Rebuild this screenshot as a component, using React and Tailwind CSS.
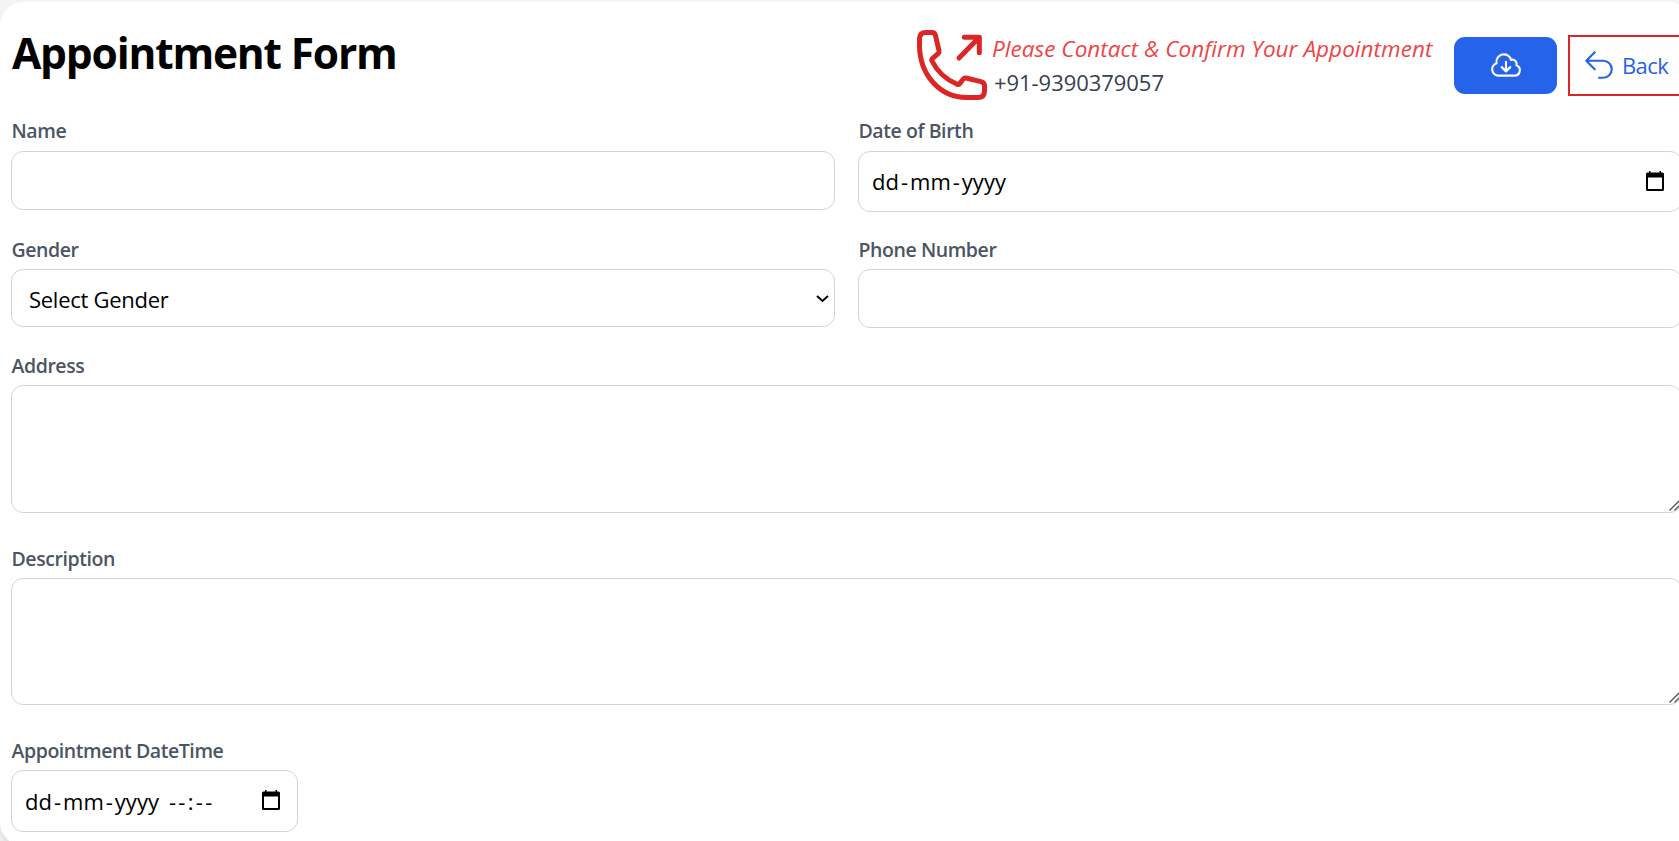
const box = "rounded-[12px] border border-[#d1d5db] bg-white";

function Label({ children, className = "pt-[2px]" }) {
  return (
    <div className={`h-[35px] whitespace-nowrap pl-[0.5px] text-[19.5px] font-semibold leading-[28px] tracking-[-0.43px] text-[#4b5563] ${className}`}>
      {children}
    </div>
  );
}

function CalendarIcon() {
  return (
    <svg className="mb-[2px] h-[20px] w-[18px] shrink-0" viewBox="0 0 18 20" fill="#000">
      <path fillRule="evenodd" d="M3 0h1.500v1.500h9V0H15v1.500h1.500A1.500 1.500 0 0 1 18 3v15.500a1.500 1.500 0 0 1-1.500 1.500h-15A1.500 1.500 0 0 1 0 18.500V3a1.500 1.500 0 0 1 1.500-1.500H3zM2 6.500V18h14V6.500z" />
    </svg>
  );
}

function DateText() {
  return (
    <span>
      dd<span className="mx-[2px]">-</span>mm<span className="mx-[2px]">-</span>yyyy
    </span>
  );
}

function PhoneIcon() {
  return (
    <svg className="h-[70px] w-[70px] shrink-0" viewBox="51 60 210 210" fill="none" stroke="#dc2626" strokeWidth="15" strokeLinecap="round" strokeLinejoin="round">
      <path d="M78 67.500H96Q104 67.500 106 75L117 122Q118 127 115 130L98 145Q94 149 96 153C112 185 137 208 170 222Q175 225 179 221L190 207Q193 203 198 204L243 215Q253.500 218 253.500 227V243Q253.500 262.500 234 262.500H200C120 262.500 58.500 195 58.500 105V87Q58.500 67.500 78 67.500Z" />
      <path d="M177 144L238 82M193 82H238V128" />
    </svg>
  );
}

function OutlineIcon({ d, className = "" }) {
  return (
    <svg className={`h-[34px] w-[34px] shrink-0 ${className}`} viewBox="0 0 24 24" fill="none" stroke="currentColor" strokeWidth="1.500" strokeLinecap="round" strokeLinejoin="round">
      <path d={d} />
    </svg>
  );
}

function Area({ className }) {
  return (
    <div className={`${box} flex items-end justify-end ${className}`}>
      <svg className="mr-px mb-px h-[11px] w-[11px]" viewBox="0 0 11 11" fill="none" stroke="#555" strokeWidth="1.400">
        <path d="M0.500 10.500L10.500 0.500M5.500 10.500L10.500 5.500" />
      </svg>
    </div>
  );
}

export default function App() {
  return (
    <div className="h-[841px] w-full overflow-hidden bg-[#f3f4f6] pt-[2px] font-['Open_Sans',sans-serif]">
      <div className="h-[844px] w-[1693px] rounded-[24px] bg-white pl-[11px] shadow-[0_14px_21px_-4px_rgba(0,0,0,0.1),0_6px_9px_-6px_rgba(0,0,0,0.1)]">
        <header className="flex h-[114px] items-start">
          <h1 className="w-[906px] whitespace-nowrap pt-[23px] pl-px text-[42.5px] font-bold leading-[56px] tracking-[-1.2px] text-black">
            Appointment Form
          </h1>
          <div className="flex w-[537px] pt-[28px]">
            <PhoneIcon />
            <div className="whitespace-nowrap pt-[2px] pl-[5px] text-[22.5px]">
              <div className="leading-[33px] tracking-[0.04px] text-[#ef4444] italic">Please Contact &amp; Confirm Your Appointment</div>
              <div className="pt-px pl-[2px] text-[22px] leading-[33px] tracking-[-0.05px] text-[#374151]">+91-9390379057</div>
            </div>
          </div>
          <button className="mt-[35px] flex h-[57px] w-[103px] items-center justify-center rounded-[11px] bg-[#2563eb] text-white">
            <OutlineIcon className="mb-px" d="M12 9.750v6.750m0 0-3-3m3 3 3-3m-8.250 6a4.500 4.500 0 0 1-1.410-8.775 5.250 5.250 0 0 1 10.233-2.330 3 3 0 0 1 3.758 3.848A3.752 3.752 0 0 1 18 19.500H6.750Z" />
          </button>
          <button className="ml-[11px] mt-[33px] flex h-[61px] w-[125px] items-center whitespace-nowrap border-2 border-[#dc2626] pl-[12px] text-[22px] text-[#2563eb]">
            <OutlineIcon className="mb-px" d="M9 15 3 9m0 0 6-6M3 9h12a6 6 0 0 1 0 12h-3" />
            <span className="pl-[6px] tracking-[-0.6px]">Back</span>
          </button>
        </header>

        <div className="grid w-[1671px] grid-cols-[824px_824px] gap-x-[23px]">
          <div className="h-[118px]">
            <Label className="pt-px">Name</Label>
            <div className={`${box} h-[59px]`} />
          </div>
          <div className="h-[118px]">
            <Label className="pt-px">Date of Birth</Label>
            <div className={`${box} flex h-[61px] items-center justify-between pr-[17px] pl-[13px] text-[22px] text-black`}>
              <DateText />
              <CalendarIcon />
            </div>
          </div>
          <div className="h-[116px]">
            <Label>Gender</Label>
            <div className={`${box} flex h-[58px] items-center justify-between pt-px pr-[5px] pl-[17px] text-[22px] text-black`}>
              <span className="pt-px tracking-[-0.28px]">Select Gender</span>
              <svg className="h-[8px] w-[13px]" viewBox="0 0 13 8" fill="none" stroke="#000" strokeWidth="2">
                <path d="M1 1L6.500 6L12 1" />
              </svg>
            </div>
          </div>
          <div className="h-[116px]">
            <Label>Phone Number</Label>
            <div className={`${box} h-[59px]`} />
          </div>
        </div>

        <div className="h-[193px] w-[1671px]">
          <Label>Address</Label>
          <Area className="h-[128px]" />
        </div>
        <div className="h-[192px] w-[1671px]">
          <Label>Description</Label>
          <Area className="h-[127px]" />
        </div>
        <Label>Appointment DateTime</Label>
        <div className={`${box} flex h-[62px] w-[287px] items-center justify-between pr-[17px] pl-[13px] text-[22px] text-black`}>
          <span>
            <DateText />
            <span className="ml-[10px] tracking-[2.3px]">--:--</span>
          </span>
          <CalendarIcon />
        </div>
      </div>
    </div>
  );
}
